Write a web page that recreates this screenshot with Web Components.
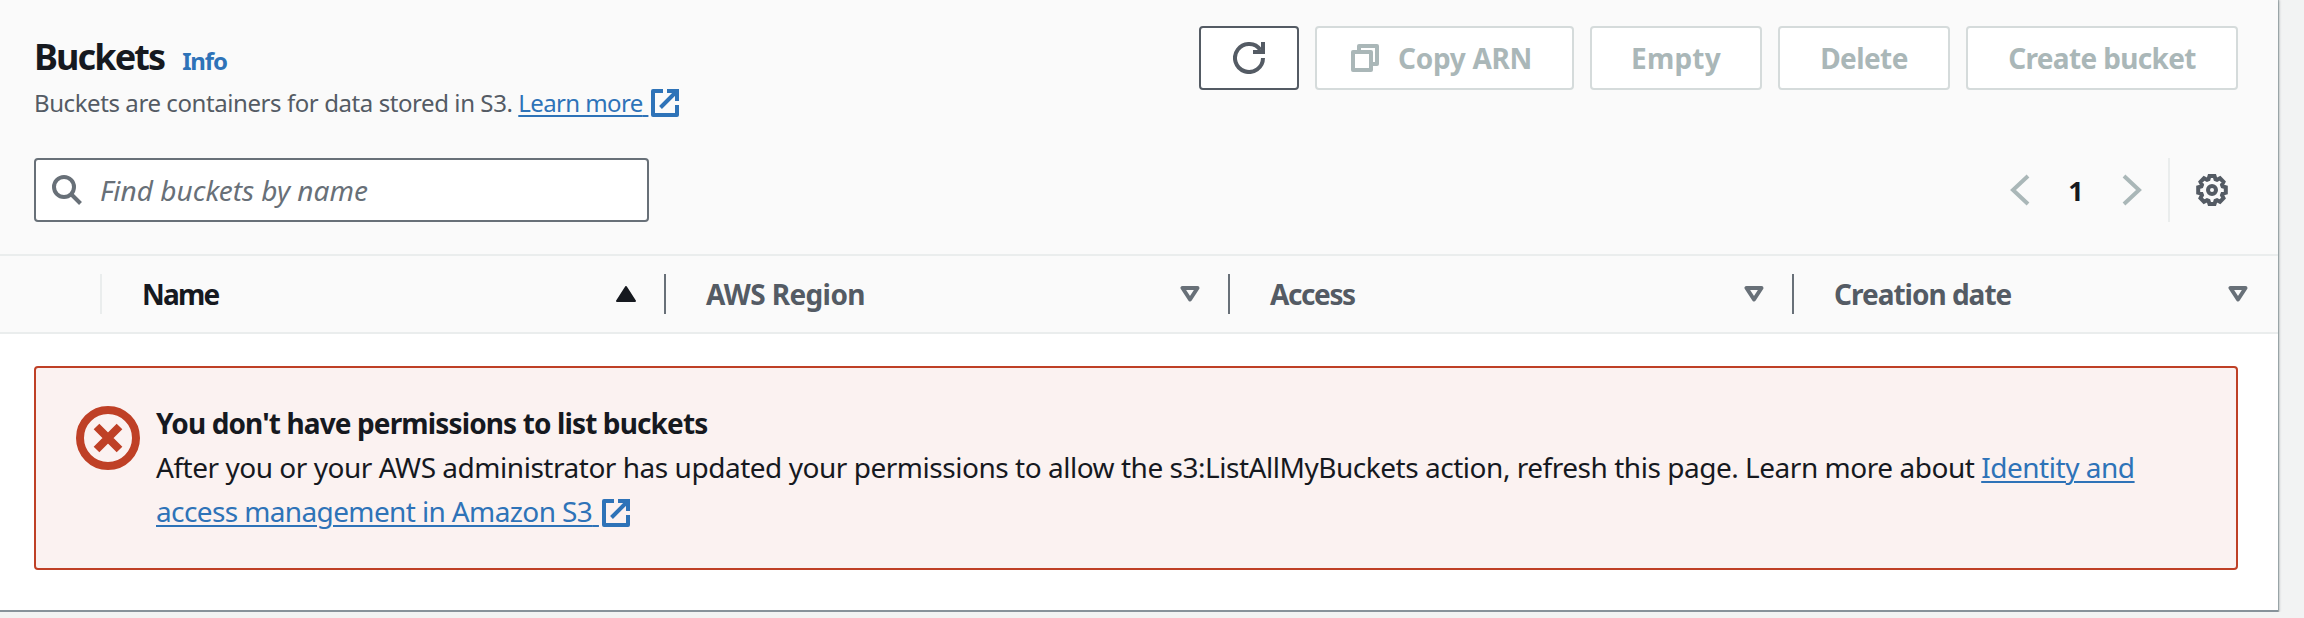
<!DOCTYPE html>
<html lang="en">
<head>
<meta charset="utf-8">
<title>Buckets</title>
<style>
  body { margin: 0; background: #f2f3f3; font-family: "Noto Sans", "Open Sans", sans-serif; font-size: 28px; color: #16191f; overflow: hidden; }
</style>
</head>
<body>
<s3-panel></s3-panel>
<script>
const define = (name, html) => {
  const t = document.createElement('template');
  t.innerHTML = html;
  customElements.define(name, class extends HTMLElement {
    constructor() {
      super();
      this.attachShadow({ mode: 'open' }).append(t.content.cloneNode(true));
    }
  });
};

const ICONS = {
  external: ['0 0 28 28', '<path fill="none" stroke="currentColor" stroke-width="4" stroke-linejoin="round" d="M12 2H2v24h24V16"/><path fill="none" stroke="currentColor" stroke-width="4" d="M16 2h10v10M25 3 9.500 18.500"/>'],
  refresh: ['0 0 32 32', '<path fill="none" stroke="currentColor" stroke-width="4" d="M30 16A14 14 0 1 1 27.500 8"/><path fill="none" stroke="currentColor" stroke-width="4" d="M20 10h10V0"/>'],
  copy: ['0 0 28 28', '<path fill="none" stroke="currentColor" stroke-width="4" stroke-linejoin="round" d="M2 8h18v18H2zM8 7V2h18v18h-5"/>'],
  search: ['0 0 30 30', '<circle cx="12" cy="12" r="10" fill="none" stroke="currentColor" stroke-width="4"/><path stroke="currentColor" stroke-width="4" d="m19 19 9.500 9.500"/>'],
  left: ['0 0 20 32', '<path fill="none" stroke="currentColor" stroke-width="4" d="M18 2 3 16l15 14"/>'],
  right: ['0 0 20 32', '<path fill="none" stroke="currentColor" stroke-width="4" d="m2 2 15 14L2 30"/>'],
  gear: ['0 0 32 32', '<path fill="none" stroke="currentColor" stroke-width="4" d="M13.500 2h5l1 3.200 1.500.6 3-1.500 3.500 3.500-1.500 3 .6 1.500 3.200 1v5.400l-3.200 1-.6 1.500 1.500 3-3.500 3.500-3-1.500-1.500.6-1 3.200h-5l-1-3.200-1.500-.6-3 1.500-3.500-3.500 1.500-3-.6-1.500-3.200-1v-5.400l3.200-1 .6-1.500-1.500-3 3.500-3.500 3 1.500 1.500-.6z"/><circle cx="16" cy="16" r="4" fill="none" stroke="currentColor" stroke-width="4"/>'],
  asc: ['0 0 20 16', '<path fill="currentColor" stroke="currentColor" stroke-width="2" stroke-linejoin="round" d="M10 1 19 15H1z"/>'],
  sort: ['0 0 20 16', '<path fill="none" stroke="currentColor" stroke-width="4" stroke-linejoin="round" d="M2.500 2h15L10 13.500z"/>'],
  error: ['0 0 64 64', '<circle cx="32" cy="32" r="28" fill="none" stroke="currentColor" stroke-width="8"/><path fill="none" stroke="currentColor" stroke-width="8" d="m20.500 20.500 23 23m0-23-23 23"/>']
};
customElements.define('ui-icon', class extends HTMLElement {
  connectedCallback() {
    const [box, body] = ICONS[this.getAttribute('name')];
    const [, , w, h] = box.split(' ');
    this.attachShadow({ mode: 'open' }).innerHTML =
      `<style>:host{display:inline-block;flex:none;width:${w}px;height:${h}px}svg{display:block;width:100%;height:100%}</style><svg viewBox="${box}">${body}</svg>`;
  }
});

define('ui-button', `<style>
  :host { box-sizing: border-box; height: 64px; border: 2px solid #d5dbdb; border-radius: 4px; background: #fff; color: #aab7b8;
    display: flex; align-items: center; justify-content: center; gap: 19px; font-weight: 700; letter-spacing: -.3px; padding-bottom: 1px; white-space: nowrap; }
  :host([active]) { border-color: #545b64; color: #545b64; padding: 0; }
</style><slot></slot>`);

define('ui-link', `<style>
  :host { color: #2e73b8; }
  a { text-decoration: underline; text-decoration-thickness: 2px; text-underline-offset: 3px; }
  ui-icon { vertical-align: -5px; margin-left: 3px; }
</style><a><slot></slot>&nbsp;</a><ui-icon name="external"></ui-icon>`);

define('s3-header', `<style>
  :host { display: flex; justify-content: space-between; align-items: flex-start; height: 132px; padding-top: 26px; }
  .title { display: flex; align-items: baseline; gap: 18px; height: 52px; margin-top: 5px; }
  h1 { margin: 0; font-size: 36px; line-height: 52px; letter-spacing: -1.9px; }
  b { font-size: 24px; color: #2e73b8; letter-spacing: -1.1px; }
  p { margin: 3px 0 0; font-size: 24px; line-height: 34px; color: #545b64; letter-spacing: -.42px; white-space: nowrap; }
  p ui-link { letter-spacing: -.6px; }
  .actions { display: flex; gap: 16px; }
</style>
<div><div class="title"><h1>Buckets</h1><b>Info</b></div>
<p>Buckets are containers for data stored in S3. <ui-link>Learn more</ui-link></p></div>
<div class="actions">
<ui-button active style="width:100px"><ui-icon name="refresh"></ui-icon></ui-button>
<ui-button style="width:259px;padding-right:6px"><ui-icon name="copy"></ui-icon><span>Copy ARN</span></ui-button>
<ui-button style="width:172px;letter-spacing:.2px">Empty</ui-button>
<ui-button style="width:172px;letter-spacing:-.6px">Delete</ui-button>
<ui-button style="width:272px;letter-spacing:-.65px">Create bucket</ui-button>
</div>`);

define('s3-toolbar', `<style>
  :host { display: flex; justify-content: space-between; height: 64px; }
  .search { box-sizing: border-box; width: 615px; border: 2px solid #687078; border-radius: 4px; background: #fff; color: #687078;
    display: flex; align-items: center; gap: 18px; padding-left: 16px; font-style: italic; }
  .pages { display: flex; align-items: center; color: #aab7b8; }
  .pages b { color: #16191f; width: 92px; text-align: center; font-size: 27px; }
  .gear { box-sizing: border-box; height: 64px; margin-left: 26px; border-left: 2px solid #eaeded; padding: 16px 10px 0 26px; color: #545b64; }
</style>
<div class="search"><ui-icon name="search"></ui-icon><span>Find buckets by name</span></div>
<div class="pages"><ui-icon name="left"></ui-icon><b>1</b><ui-icon name="right"></ui-icon><div class="gear"><ui-icon name="gear"></ui-icon></div></div>`);

define('s3-column', `<style>
  :host { box-sizing: border-box; height: 40px; border-left: 2px solid #687078; padding: 0 28px 0 40px; display: flex; align-items: center;
    justify-content: space-between; font-weight: 700; color: #545b64; letter-spacing: -.6px; line-height: 40px; white-space: nowrap; }
  :host([first]) { border-color: #eaeded; color: #16191f; }
  ::slotted(ui-icon) { color: #687078; }
  :host([first]) ::slotted(ui-icon) { color: #16191f; }
</style><slot></slot>`);

define('s3-columns', `<style>
  :host { display: grid; grid-template-columns: 564px 564px 564px 1fr; padding-left: 100px; height: 76px; align-items: center;
    border-top: 2px solid #eaeded; border-bottom: 2px solid #eaeded; }
</style>
<s3-column first style="letter-spacing:-1.8px"><span>Name</span><ui-icon name="asc"></ui-icon></s3-column>
<s3-column><span>AWS Region</span><ui-icon name="sort"></ui-icon></s3-column>
<s3-column style="letter-spacing:-1.4px"><span>Access</span><ui-icon name="sort"></ui-icon></s3-column>
<s3-column style="padding-right:30px;letter-spacing:-1px"><span>Creation date</span><ui-icon name="sort"></ui-icon></s3-column>`);

define('s3-alert', `<style>
  :host { display: flex; gap: 16px; box-sizing: border-box; height: 204px; margin: 32px 40px 0 34px; border: 2px solid #bf4026; border-radius: 4px;
    background: #fbf2f1; padding: 33px 40px 0; line-height: 44px; }
  ui-icon { color: #bf4026; margin-top: 5px; }
  b { display: block; letter-spacing: -.87px; }
  p { margin: 0; letter-spacing: -.47px; white-space: nowrap; }
  .tail { letter-spacing: -.62px; }
</style><ui-icon name="error"></ui-icon>
<div><b>You don't have permissions to list buckets</b>
<p>After you or your AWS administrator has updated your permissions to allow the s3:ListAllMyBuckets action, refresh this page. Learn more about <ui-link>Identity and<br><span class="tail">access management in Amazon S3</span></ui-link></p></div>`);

define('s3-panel', `<style>
  :host { display: block; width: 2278px; padding-bottom: 40px; background: #fff; border-bottom: 2px solid #87929a;
    box-shadow: 0 1px 1px #aeb6b9, 1px 0 1px rgba(0,28,36,.25), 0 2px 2px rgba(0,28,36,.2), 2px 0 2px rgba(0,28,36,.12); }
  .head { background: #fafafa; }
  .top { padding: 0 40px 32px 34px; }
</style>
<div class="head"><div class="top"><s3-header></s3-header><s3-toolbar></s3-toolbar></div><s3-columns></s3-columns></div>
<s3-alert></s3-alert>`);
</script>
</body>
</html>
